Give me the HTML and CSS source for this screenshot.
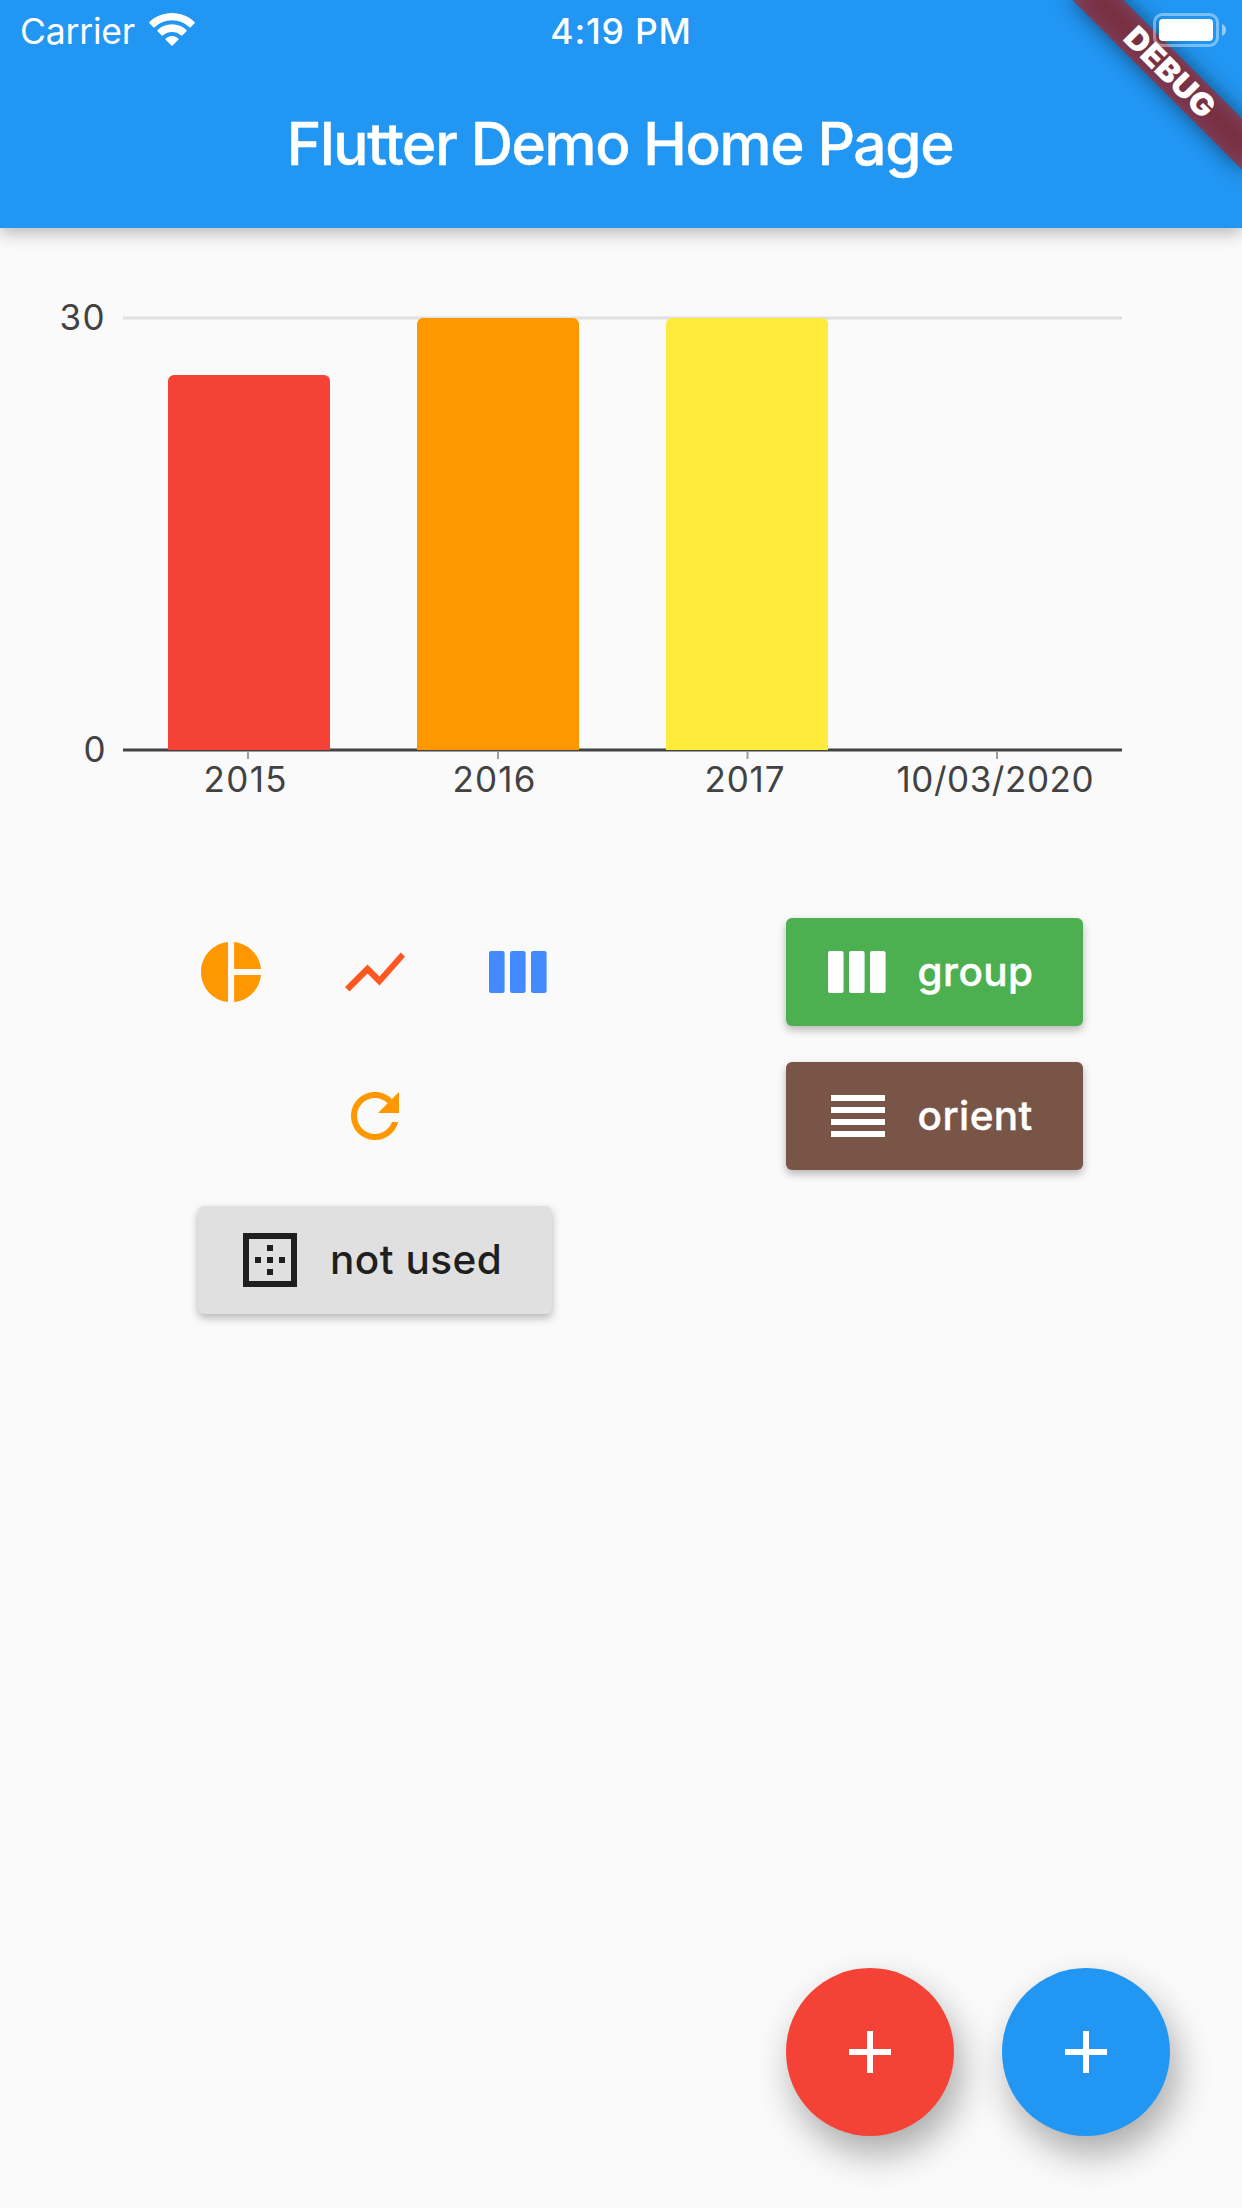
FILE: index.html
```html
<!DOCTYPE html>
<html lang="en">
<head>
<meta charset="utf-8">
<title>Flutter Demo Home Page</title>
<link rel="stylesheet" href="styles.css">
</head>
<body>
<div class="app">
  <header class="appbar">
    <div class="status">
      <div class="status-left">
        <span class="carrier">Carrier</span>
        <svg class="wifi" width="46" height="34" viewBox="0 0 46 34" fill="#fff">
          <path d="M23 0C32 0 40 3.5 45.6 9q.5.6 0 1.200L41.600 14.200q-.6.500-1.200 0A25 25 0 0 0 5.600 14.200q-.6.500-1.200 0L.4 10.200q-.5-.6 0-1.200C6 3.500 14 0 23 0z"/>
          <path d="M23 11.300C28.500 11.300 33.700 13.400 37.500 17q.5.600 0 1.200L33.300 22.400q-.6.500-1.200 0A14 14 0 0 0 13.900 22.400q-.6.500-1.200 0L8.500 18.200q-.5-.6 0-1.200C12.300 13.400 17.500 11.300 23 11.300z"/>
          <path d="M23 23C25.500 23 27.700 24 29.300 25.500q.5.600 0 1.200L23.600 32.500q-.6.500-1.200 0L16.700 26.700q-.5-.6 0-1.200C18.300 24 20.500 23 23 23z"/>
        </svg>
      </div>
      <span class="clock">4:19 PM</span>
      <svg class="battery" width="74" height="34" viewBox="0 0 74 34">
        <rect x="1.500" y="1.500" width="63" height="31" rx="8" fill="none" stroke="#fff" stroke-opacity=".4" stroke-width="3"/>
        <rect x="6" y="6" width="54" height="22" rx="4" fill="#fff"/>
        <path d="M69 11q4 1.500 4 6t-4 6z" fill="#fff" fill-opacity=".5"/>
      </svg>
    </div>
    <h1 class="title">Flutter Demo Home Page</h1>
  </header>

  <svg class="banner" width="242" height="242" viewBox="1000 0 242 242">
    <defs><filter id="soft" x="-30%" y="-150%" width="160%" height="400%"><feGaussianBlur stdDeviation="11"/></filter></defs>
    <g transform="translate(1242 0) rotate(45)">
      <rect x="-120" y="84" width="240" height="36" fill="#000" fill-opacity=".5" filter="url(#soft)"/>
      <rect x="-120" y="84" width="240" height="36" fill="#b71c1c" fill-opacity=".627"/>
      <text class="banner-text" x="-57" y="113" textLength="114" lengthAdjust="spacingAndGlyphs">DEBUG</text>
    </g>
  </svg>

  <main class="content">
    <svg class="chart" width="1242" height="672" viewBox="0 228 1242 672">
      <path d="M123 318H1122" stroke="#e0e0e0" stroke-width="3"/>
      <path d="M123 750H1122" stroke="#424242" stroke-width="3"/>
      <path d="M248 751.500V759M498 751.500V759M747.500 751.500V759M997 751.500V759" stroke="#9e9e9e" stroke-width="2"/>
      <path d="M168 750V381a6 6 0 0 1 6-6h150a6 6 0 0 1 6 6V750z" fill="#f44336"/>
      <path d="M417 750V324a6 6 0 0 1 6-6h150a6 6 0 0 1 6 6V750z" fill="#ff9800"/>
      <path d="M666 750V324a6 6 0 0 1 6-6h150a6 6 0 0 1 6 6V750z" fill="#ffeb3b"/>
      <g class="axis-label">
        <text x="59.500" y="330" textLength="45">30</text>
        <text x="83.500" y="762">0</text>
        <text x="203.500" y="792" textLength="83">2015</text>
        <text x="452.500" y="792" textLength="83">2016</text>
        <text x="704.500" y="792" textLength="80">2017</text>
        <text x="896.500" y="792" textLength="197">10/03/2020</text>
      </g>
    </svg>

    <div class="controls">
      <div class="col-left">
        <div class="row">
          <button class="icon-btn orange"><svg class="icon" viewBox="0 0 24 24"><path d="M11 2v20c-5.070-.5-9-4.790-9-10s3.930-9.500 9-10zm2.030 0v8.990H22c-.47-4.740-4.240-8.520-8.970-8.990zm0 11.010V22c4.740-.47 8.500-4.250 8.970-8.990h-8.970z"/></svg></button>
          <button class="icon-btn deep"><svg class="icon" viewBox="0 0 24 24"><path d="M3.500 18.490l6-6.010 4 4L22 6.920l-1.410-1.410-7.090 7.970-4-4L2 16.990z"/></svg></button>
          <button class="icon-btn blue"><svg class="icon" viewBox="0 0 24 24"><rect x="2" y="5" width="5.200" height="14" rx=".7"/><rect x="9" y="5" width="5.200" height="14" rx=".7"/><rect x="16" y="5" width="5.200" height="14" rx=".7"/></svg></button>
        </div>
        <div class="row">
          <button class="icon-btn orange"><svg class="icon" viewBox="0 0 24 24"><path d="M17.650 6.350C16.200 4.900 14.210 4 12 4c-4.420 0-7.990 3.580-7.990 8s3.570 8 7.990 8c3.730 0 6.840-2.550 7.730-6h-2.080c-.82 2.330-3.040 4-5.650 4-3.310 0-6-2.690-6-6s2.690-6 6-6c1.660 0 3.140.69 4.220 1.780L13 11h7V4l-2.350 2.350z"/></svg></button>
        </div>
        <div class="row">
          <button class="raised plain"><svg class="icon" viewBox="0 0 24 24"><path d="M13 7h-2v2h2V7zm0 4h-2v2h2v-2zm4 0h-2v2h2v-2zM3 3v18h18V3H3zm16 16H5V5h14v14zm-6-4h-2v2h2v-2zm-4-4H7v2h2v-2z"/></svg><span class="lbl">not used</span></button>
        </div>
      </div>
      <div class="col-right">
        <div class="row">
          <button class="raised green"><svg class="icon" viewBox="0 0 24 24"><rect x="2" y="5" width="5.200" height="14" rx=".7"/><rect x="9" y="5" width="5.200" height="14" rx=".7"/><rect x="16" y="5" width="5.200" height="14" rx=".7"/></svg><span class="lbl">group</span></button>
        </div>
        <div class="row">
          <button class="raised brown"><svg class="icon" viewBox="0 0 24 24"><path d="M3 5h18v2H3zM3 9h18v2H3zM3 13h18v2H3zM3 17h18v2H3z"/></svg><span class="lbl">orient</span></button>
        </div>
      </div>
    </div>
  </main>

  <footer class="fabs">
    <button class="fab red"><svg class="icon" viewBox="0 0 24 24"><path d="M19 13h-6v6h-2v-6H5v-2h6V5h2v6h6z"/></svg></button>
    <button class="fab azure"><svg class="icon" viewBox="0 0 24 24"><path d="M19 13h-6v6h-2v-6H5v-2h6V5h2v6h6z"/></svg></button>
  </footer>
</div>
</body>
</html>
```
FILE: styles.css
```css
* { box-sizing: border-box; }
body { margin: 0; background: #fafafa; font-family: Inter, "Liberation Sans", sans-serif; }
button { border: 0; margin: 0; padding: 0; background: none; font: inherit; color: inherit; display: flex; align-items: center; justify-content: center; }
svg { display: block; }

.app { position: relative; width: 1242px; height: 2208px; overflow: hidden; display: flex; flex-direction: column; }

.appbar { height: 228px; flex: none; background: #2196f3; color: #fff; box-shadow: 0 5px 16px rgba(0, 0, 0, .27); display: flex; flex-direction: column; }
.status { height: 60px; display: grid; grid-template-columns: 1fr auto 1fr; padding: 0 15px; position: relative; z-index: 2; }
.status-left { display: flex; align-items: flex-start; padding: 13px 0 0 5px; }
.carrier { font-size: 35.5px; line-height: 37px; font-weight: 400; letter-spacing: -.2px; width: 129px; white-space: nowrap; }
.clock { font-size: 35.5px; line-height: 37px; font-weight: 500; letter-spacing: .8px; padding-top: 13px; }
.battery { justify-self: end; margin-top: 13px; }
.title { margin: 0; height: 168px; line-height: 168px; font-size: 58.5px; font-weight: 500; letter-spacing: -1.35px; text-align: center; white-space: nowrap; padding-right: 2px; -webkit-text-stroke: .4px #fff; }

.banner { position: absolute; top: 0; right: 0; z-index: 1; }
.banner-text { font-size: 31px; font-weight: 900; fill: #fff; }

.content { flex: 1; }
.axis-label { font-size: 35px; font-weight: 400; fill: #424242; }

.controls { display: flex; padding-left: 159px; gap: 194.6px; }
.col-left { width: 432px; }
.col-right { width: 297.4px; }
.row { height: 144px; display: flex; align-items: center; justify-content: center; }
.icon { width: 72px; height: 72px; fill: currentColor; flex: none; }
.icon-btn { width: 144px; height: 144px; }
.orange { color: #ff9800; }
.deep { color: #ff5722; }
.blue { color: #448aff; }

.raised { height: 108px; width: 297.4px; border-radius: 6px; padding-left: 36px; justify-content: flex-start; gap: 24px; font-size: 40.5px; line-height: 48px; font-weight: 500; letter-spacing: .4px; box-shadow: 0 4px 8px rgba(0, 0, 0, .28); }
.plain { width: 354px; background: #e0e0e0; color: #1f1f1f; letter-spacing: .5px; }
.green { background: #4caf50; color: #fff; }
.brown { background: #795548; color: #fff; }
.green .lbl, .brown .lbl { -webkit-text-stroke: .4px #fff; }
.lbl { white-space: nowrap; padding-bottom: 1px; }

.fabs { height: 240px; flex: none; display: flex; justify-content: flex-end; gap: 48px; padding-right: 72px; }
.fab { width: 168px; height: 168px; border-radius: 50%; color: #fff; box-shadow: 7px 18px 36px rgba(0, 0, 0, .32); }
.red { background: #f44336; }
.azure { background: #2196f3; }
```
